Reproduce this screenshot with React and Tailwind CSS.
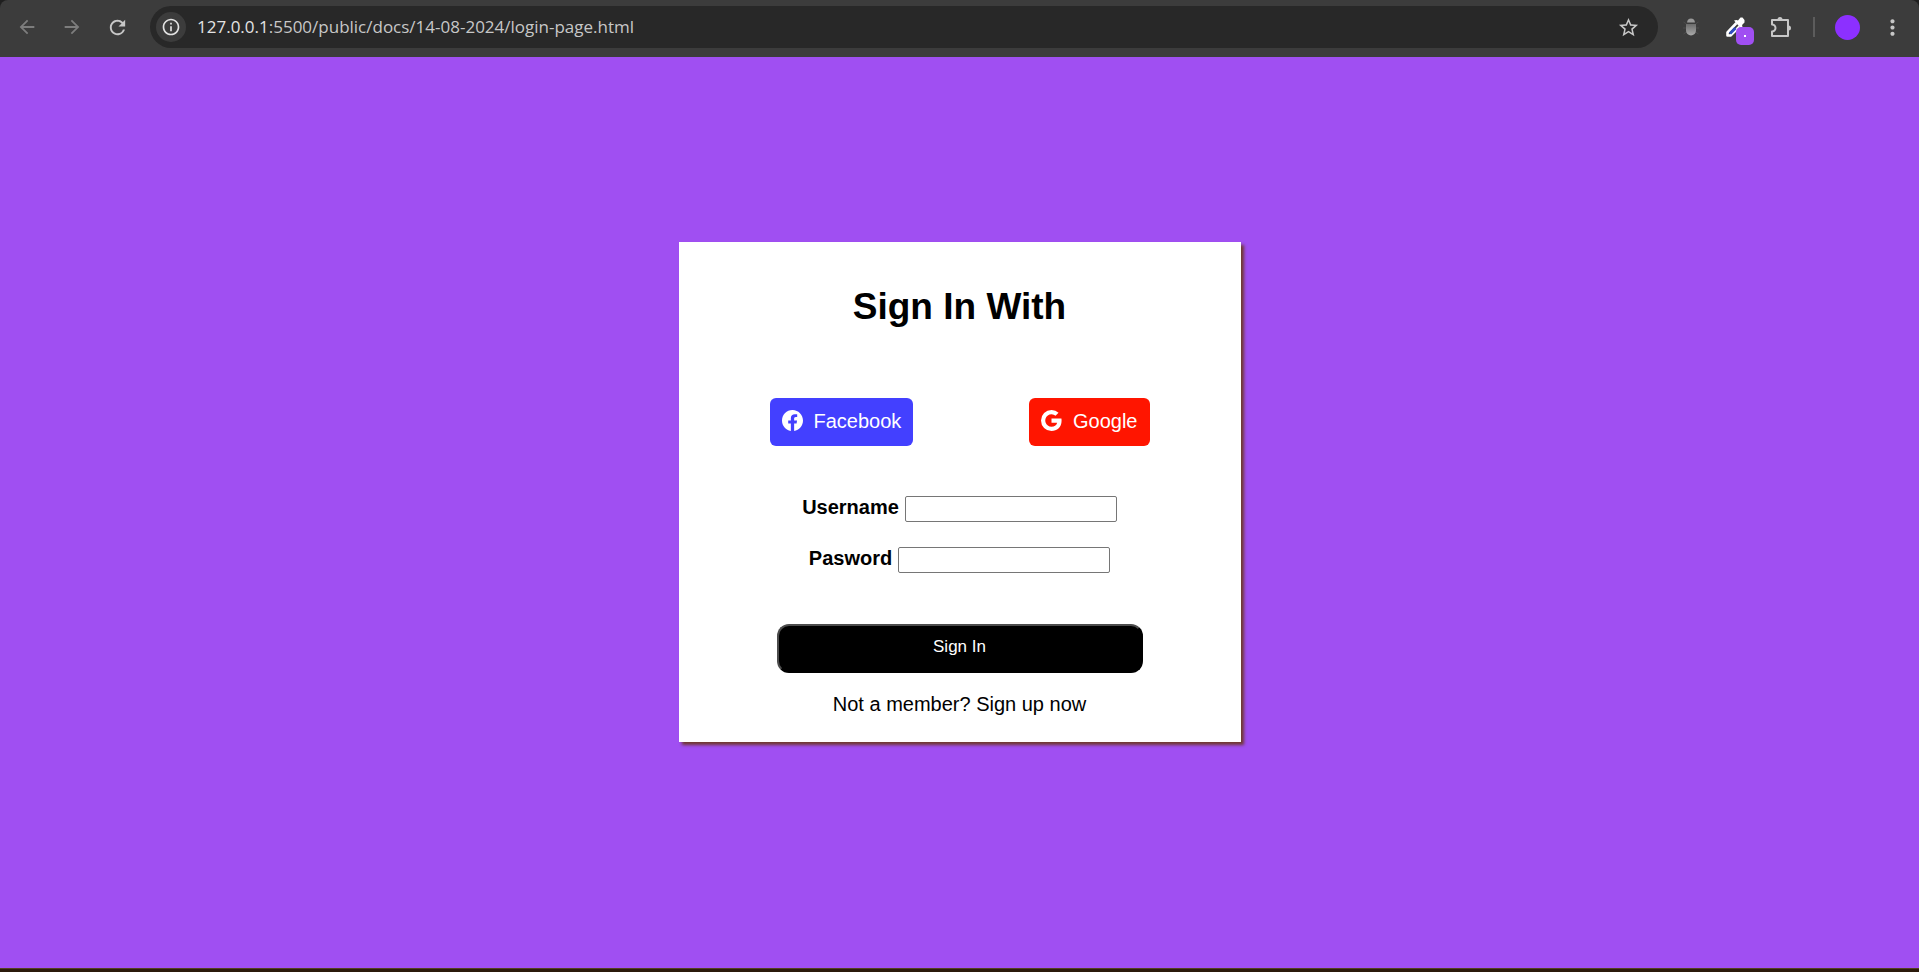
import { BsFacebook, BsGoogle } from "react-icons/bs";
import {
  MdArrowBack,
  MdArrowForward,
  MdRefresh,
  MdInfoOutline,
  MdStarBorder,
  MdMoreVert,
} from "react-icons/md";

function ToolButton({ label, className = "", children }) {
  return (
    <button type="button" aria-label={label} className={`flex size-7 items-center justify-center ${className}`}>
      {children}
    </button>
  );
}

function BugIcon() {
  return (
    <svg width="18" height="20" viewBox="0 0 18 20" fill="none">
      <defs>
        <linearGradient id="bug" x1="0" y1="0" x2="0" y2="1">
          <stop offset="0" stopColor="#6c6c6c" />
          <stop offset="1" stopColor="#aaa" />
        </linearGradient>
      </defs>
      <path d="M1.500 5l3 2M1 11h3M1.500 17l3-2M16.500 5l-3 2M17 11h-3M16.500 17l-3-2" stroke="#4c4c4c" />
      <path d="M5 5.500Q5.500 1.500 9 1.500T13 5.500z" fill="#999" />
      <path d="M4 7h10v6.500a5 5 0 0 1-10 0z" fill="url(#bug)" />
    </svg>
  );
}

function PickerIcon() {
  return (
    <svg width="22" height="22" viewBox="0 0 22 22" fill="none">
      <path d="M12.500 7L3.500 16.500V19.500H6.500L15.500 10.500" stroke="#fff" strokeWidth="2.600" strokeLinejoin="round" />
      <path d="M11.500 12L6 17.500" stroke="#2f4fc0" strokeWidth="3" />
      <path d="M10 4.500L12.500 4l1.500.5L16.500 1.500H18.500L20.500 4V6.500L18 9l.5 1.500L17 12.500z" fill="#fff" />
    </svg>
  );
}

function PuzzleIcon() {
  return (
    <svg width="22" height="22" viewBox="0 0 22 22" fill="none">
      <path
        d="M2 4h16v16H2v-4.500a3.500 3.500 0 0 0 0-7z"
        stroke="#c7c7c7"
        strokeWidth="2"
        strokeLinejoin="round"
      />
      <path d="M7.500 3.500a2.500 2.500 0 0 1 5 0zM18.500 9.500a2.500 2.500 0 0 1 0 5z" fill="#c7c7c7" />
    </svg>
  );
}

function BrowserBar() {
  return (
    <div className="bg-[#1f1f1f]">
      <header className="flex h-[57px] items-center rounded-t-lg bg-[#3c3c3c] pr-[13px] pb-[3px] pl-[13px] text-[#c7c7c7]">
        <nav className="flex gap-[17px]">
          <ToolButton label="Back" className="text-[#7d7d7d]">
            <MdArrowBack size={22} />
          </ToolButton>
          <ToolButton label="Forward" className="text-[#7d7d7d]">
            <MdArrowForward size={22} />
          </ToolButton>
          <ToolButton label="Reload">
            <MdRefresh size={23} />
          </ToolButton>
        </nav>
        <div className="ml-[19px] flex h-[42px] flex-1 items-center rounded-full bg-[#282828] pr-4 pl-[6px]">
          <button
            type="button"
            aria-label="Site information"
            className="flex size-[30px] items-center justify-center rounded-full bg-[#3c3c3c] text-[#e3e3e3]"
          >
            <MdInfoOutline size={20} />
          </button>
          <p className="ml-[11px] flex-1 font-['Open_Sans','Noto_Sans',sans-serif] text-[17px] text-[#c7c7c7]">
            <span className="text-[#e3e3e3]">127.0.0.1</span>:5500/public/docs/14-08-2024/login-page.html
          </p>
          <ToolButton label="Bookmark">
            <MdStarBorder size={23} />
          </ToolButton>
        </div>
        <div className="ml-[19px] flex items-center">
          <ToolButton label="Debugger">
            <BugIcon />
          </ToolButton>
          <ToolButton label="Color picker" className="relative ml-4">
            <PickerIcon />
            <span className="absolute top-[14px] left-[15px] flex size-[18px] items-center justify-center rounded-[5px] bg-[#a04ff2]">
              <span className="size-[2px] bg-white" />
            </span>
          </ToolButton>
          <ToolButton label="Extensions" className="ml-[18px]">
            <PuzzleIcon />
          </ToolButton>
          <span className="ml-[18px] h-5 w-[2px] bg-[#5c5c5c]" />
          <button type="button" aria-label="Profile" className="ml-5 size-[25px] rounded-full bg-[#8c30ff]" />
          <ToolButton label="Menu" className="ml-[18px]">
            <MdMoreVert size={25} />
          </ToolButton>
        </div>
      </header>
    </div>
  );
}

function SocialButton({ icon: Icon, label, className }) {
  return (
    <button
      type="button"
      className={`flex h-12 items-center gap-[11px] rounded-md px-3 pb-[2px] text-[20px] text-white ${className}`}
    >
      <Icon size={21} />
      {label}
    </button>
  );
}

function Field({ id, label, type }) {
  return (
    <div className="flex items-start gap-[6px]">
      <label htmlFor={id} className="text-[20px] leading-[22px] font-bold">
        {label}
      </label>
      <input id={id} type={type} className="h-[26px] w-[212px] rounded-[2px] border border-[#767676] bg-white px-1" />
    </div>
  );
}

export default function App() {
  return (
    <div className="flex min-h-screen flex-col bg-[#a04ff2] font-['Liberation_Sans',Arial,sans-serif] text-black">
      <BrowserBar />
      <main className="flex flex-1 items-center justify-center pb-[42px]">
        <form className="flex w-[562px] flex-col items-center bg-white pt-[42px] pb-[26px] shadow-[3px_3px_3px_#70382f]">
          <h1 className="text-[37px] leading-[46px] font-bold">Sign In With</h1>
          <div className="mt-[68px] flex w-[380px] justify-between">
            <SocialButton icon={BsFacebook} label="Facebook" className="bg-[#4340ff]" />
            <SocialButton icon={BsGoogle} label="Google" className="bg-[#ff1500]" />
          </div>
          <div className="mt-[50px] flex flex-col items-center gap-[25px]">
            <Field id="username" label="Username" type="text" />
            <Field id="password" label="Pasword" type="password" />
          </div>
          <button
            type="submit"
            className="mt-[51px] h-[49px] w-[366px] rounded-xl border-2 border-t-[#4c4c4c] border-r-black border-b-black border-l-[#4c4c4c] bg-black pb-[2px] text-[17px] text-white"
          >
            Sign In
          </button>
          <p className="mt-[19px] text-[20px] leading-[24px]">Not a member? Sign up now</p>
        </form>
      </main>
      <div className="h-1 border-t border-[#54401f] bg-[#2b1a0b]" />
    </div>
  );
}
